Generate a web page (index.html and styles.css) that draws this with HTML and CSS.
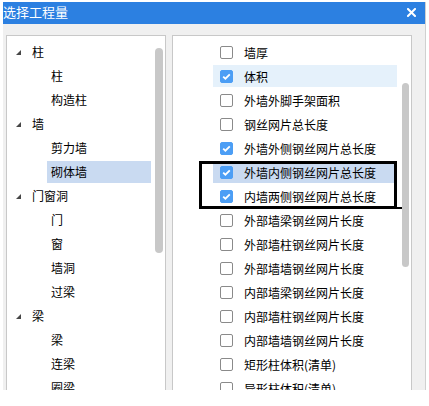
FILE: index.html
```html
<!DOCTYPE html>
<html lang="zh-CN">
<head>
<meta charset="utf-8">
<title>选择工程量</title>
<link rel="stylesheet" href="styles.css">
</head>
<body>
<div class="dialog">
  <div class="titlebar">
    <span class="title">选择工程量</span>
    <svg class="close" width="9" height="9" viewBox="0 0 9 9"><path d="M1 1L8 8M8 1L1 8" stroke="#fff" stroke-width="2" stroke-linecap="square"/></svg>
  </div>
  <div class="content">
    <div class="panel panel-left">
      <ul class="tree">
        <li class="node"><span class="tri"></span>柱</li>
        <li class="leaf"><span class="leaf-label">柱</span></li>
        <li class="leaf"><span class="leaf-label">构造柱</span></li>
        <li class="node"><span class="tri"></span>墙</li>
        <li class="leaf"><span class="leaf-label">剪力墙</span></li>
        <li class="leaf"><span class="leaf-label selected">砌体墙</span></li>
        <li class="node"><span class="tri"></span>门窗洞</li>
        <li class="leaf"><span class="leaf-label">门</span></li>
        <li class="leaf"><span class="leaf-label">窗</span></li>
        <li class="leaf"><span class="leaf-label">墙洞</span></li>
        <li class="leaf"><span class="leaf-label">过梁</span></li>
        <li class="node"><span class="tri"></span>梁</li>
        <li class="leaf"><span class="leaf-label">梁</span></li>
        <li class="leaf"><span class="leaf-label">连梁</span></li>
        <li class="leaf"><span class="leaf-label">圈梁</span></li>
      </ul>
      <div class="scroll scroll-left"><div class="thumb thumb-left"></div></div>
    </div>
    <div class="panel panel-right">
      <ul class="checklist">
        <li class="item"><span class="cb"></span>墙厚</li>
        <li class="item hover"><span class="cb on"><svg viewBox="0 0 13 13" width="13" height="13"><path d="M3.2 6.6L5.4 8.7L9.8 4.3" fill="none" stroke="#fff" stroke-width="1.8"/></svg></span>体积</li>
        <li class="item"><span class="cb"></span>外墙外脚手架面积</li>
        <li class="item"><span class="cb"></span>钢丝网片总长度</li>
        <li class="item"><span class="cb on"><svg viewBox="0 0 13 13" width="13" height="13"><path d="M3.2 6.6L5.4 8.7L9.8 4.3" fill="none" stroke="#fff" stroke-width="1.8"/></svg></span>外墙外侧钢丝网片总长度</li>
        <li class="item selected"><span class="cb on"><svg viewBox="0 0 13 13" width="13" height="13"><path d="M3.2 6.6L5.4 8.7L9.8 4.3" fill="none" stroke="#fff" stroke-width="1.8"/></svg></span>外墙内侧钢丝网片总长度</li>
        <li class="item"><span class="cb on"><svg viewBox="0 0 13 13" width="13" height="13"><path d="M3.2 6.6L5.4 8.7L9.8 4.3" fill="none" stroke="#fff" stroke-width="1.8"/></svg></span>内墙两侧钢丝网片总长度</li>
        <li class="item"><span class="cb"></span>外部墙梁钢丝网片长度</li>
        <li class="item"><span class="cb"></span>外部墙柱钢丝网片长度</li>
        <li class="item"><span class="cb"></span>外部墙墙钢丝网片长度</li>
        <li class="item"><span class="cb"></span>内部墙梁钢丝网片长度</li>
        <li class="item"><span class="cb"></span>内部墙柱钢丝网片长度</li>
        <li class="item"><span class="cb"></span>内部墙墙钢丝网片长度</li>
        <li class="item"><span class="cb"></span>矩形柱体积(清单)</li>
        <li class="item"><span class="cb"></span>异形柱体积(清单)</li>
      </ul>
      <div class="scroll scroll-right"><div class="thumb thumb-right"></div></div>
    </div>
  </div>
  <div class="annot"></div>
</div>
</body>
</html>
```

FILE: styles.css
```css
* { box-sizing: border-box; }
html, body { margin: 0; padding: 0; background: #fff; }
body {
  font-family: "Noto Sans CJK SC", "Noto Sans", "DejaVu Sans", sans-serif;
  font-size: 12px;
  color: #000;
}
.dialog {
  position: relative;
  margin: 2px 0 0 3px;
  width: 423px;
  height: 388px;
  background: #f0f0f0;
  border-right: 1px solid #d0d0d0;
  overflow: hidden;
}
.titlebar {
  height: 22px;
  background: #2c80e1;
  display: flex;
  align-items: center;
  justify-content: space-between;
  padding: 0 9px 0 0;
}
.title {
  color: #fff;
  font-size: 13px;
  line-height: 20px;
  margin-top: -2px;
}
.close { display: block; margin-top: -2px; }
.content {
  display: flex;
  gap: 6px;
  padding: 11px 0 0 3px;
  height: 366px;
}
.panel {
  display: flex;
  background: #fff;
  border: 1px solid #c8c8c8;
  border-bottom: none;
  height: 355px;
  overflow: hidden;
}
.panel-left { width: 160px; }
.panel-right { width: 240px; }
ul {
  list-style: none;
  margin: 0;
  padding: 4px 0 0 0;
  display: flex;
  flex-direction: column;
  flex: none;
}
.tree { width: 146px; }
.node {
  height: 24px;
  line-height: 24px;
  display: flex;
  align-items: center;
  padding-left: 9px;
  flex: none;
}
.tri {
  width: 0; height: 0;
  border-left: 5px solid transparent;
  border-bottom: 5px solid #474747;
  margin-right: 11px;
  margin-top: 1px;
}
.leaf {
  height: 24px;
  padding: 1px 0 1px 40px;
  flex: none;
}
.leaf-label {
  display: block;
  width: 104px;
  height: 22px;
  line-height: 22px;
  padding-left: 4px;
}
.leaf-label.selected { background: #c9daf1; }
.scroll { flex: 1; }
.thumb { background: #c8c8c8; border-radius: 4px; }
.thumb-left { width: 8px; height: 205px; margin: 12px 0 0 2px; }
.checklist { width: 227px; }
.item {
  height: 22px;
  margin: 1px 0 1px 40px;
  width: 184px;
  display: flex;
  align-items: center;
  padding-left: 7px;
  white-space: nowrap;
  flex: none;
}
.item.hover { background: #e5f1fb; }
.item.selected { background: #c9daf1; }
.cb {
  width: 13px; height: 13px;
  border: 1px solid #8a8a8a;
  border-radius: 2px;
  background: #fff;
  margin-right: 11px;
  flex: none;
  position: relative;
}
.cb.on { background: #4c9ef5; border-color: #4c9ef5; }
.cb svg { position: absolute; left: -1px; top: -1px; }
.thumb-right { width: 7px; height: 184px; margin: 47px 0 0 2px; }
.annot {
  position: absolute;
  left: 196px;
  top: 159px;
  width: 198px;
  height: 48px;
  border: 3px solid #000;
}
.annot::after {
  content: "";
  position: absolute;
  right: -8px;
  bottom: -3px;
  width: 5px;
  height: 2px;
  background: #000;
}
```
